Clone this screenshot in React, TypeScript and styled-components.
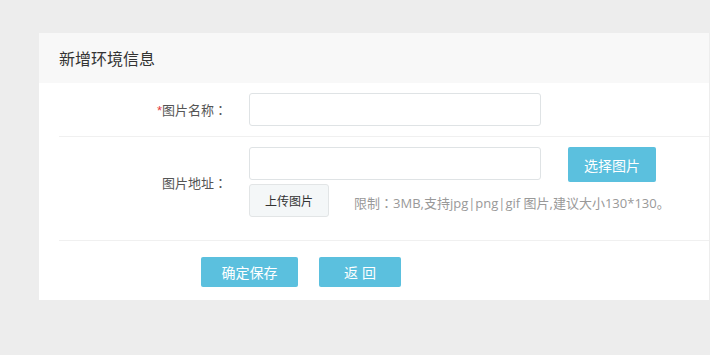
import React from "react";
import styled, { createGlobalStyle } from "styled-components";

const Global = createGlobalStyle`
  html, body { margin: 0; padding: 0; background: #ededed; }
  body { font-family: "Microsoft YaHei", "Liberation Sans", "Noto Sans CJK SC", sans-serif; }
  * { box-sizing: border-box; }
`;

const Page = styled.div`
  width: 710px;
  height: 355px;
  padding: 33px 1px 0 39px;
  background: #ededed;
`;

const Panel = styled.div`
  background: #fff;
  width: 670px;
`;

const Header = styled.div`
  height: 50px;
  background: #f8f8f8;
  display: flex;
  align-items: center;
  padding-left: 20px;
  font-size: 16px;
  color: #333;
`;

const Body = styled.div`
  padding-left: 20px;
`;

const Row = styled.div<{ $pt: number; $pb: number }>`
  display: flex;
  align-items: center;
  padding: ${(p) => p.$pt}px 0 ${(p) => p.$pb}px 0;
  border-bottom: 1px solid #f0f0f0;
`;

const Label = styled.div`
  width: 168px;
  margin-right: 22px;
  text-align: right;
  font-size: 13px;
  color: #555;
`;

const Colon = styled.span`
  font-family: "Noto Sans CJK TC", sans-serif;
`;

const Star = styled.span`
  color: #e4393c;
`;

const Input = styled.input`
  width: 292px;
  height: 33px;
  border: 1px solid #dfe3e5;
  border-radius: 3px;
  outline: none;
  padding: 0 8px;
  font-size: 13px;
  background: #fff;
`;

const Column = styled.div`
  display: flex;
  flex-direction: column;
`;

const TopLine = styled.div`
  display: flex;
  align-items: flex-start;
  gap: 27px;
`;

const BottomLine = styled.div`
  display: flex;
  align-items: center;
  margin-top: 2px;
  gap: 25px;
`;

const Button = styled.button<{ $w: number; $h: number }>`
  width: ${(p) => p.$w}px;
  height: ${(p) => p.$h}px;
  background: #5bc0de;
  color: #fff;
  border: none;
  border-radius: 2px;
  font-size: 14px;
  font-family: inherit;
  padding: 0;
  cursor: pointer;
`;

const UploadButton = styled.button`
  width: 80px;
  height: 33px;
  background: #f4f7f8;
  border: 1px solid #e2e5e6;
  border-radius: 3px;
  color: #333;
  font-size: 12px;
  font-family: inherit;
  padding: 0;
`;

const Hint = styled.span`
  font-family: "Open Sans", "Noto Sans CJK SC", sans-serif;
  font-size: 13px;
  color: #999;
  margin-top: 3px;
`;

const Actions = styled.div`
  display: flex;
  gap: 21px;
  padding: 16px 0 13px 162px;
`;

export default function App() {
  return (
    <>
      <Global />
      <Page>
        <Panel>
          <Header>新增环境信息</Header>
          <Body>
            <Row $pt={10} $pb={10}>
              <Label>
                <Star>*</Star>图片名称<Colon>：</Colon>
              </Label>
              <Input />
            </Row>
            <Row $pt={10} $pb={23}>
              <Label>
                图片地址<Colon>：</Colon>
              </Label>
              <Column>
                <TopLine>
                  <Input />
                  <Button $w={88} $h={35}>选择图片</Button>
                </TopLine>
                <BottomLine>
                  <UploadButton>上传图片</UploadButton>
                  <Hint>
                    限制<Colon>：</Colon>3MB,支持jpg|png|gif 图片,建议大小130*130。
                  </Hint>
                </BottomLine>
              </Column>
            </Row>
          </Body>
          <Actions>
            <Button $w={97} $h={30}>确定保存</Button>
            <Button $w={82} $h={30}>返 回</Button>
          </Actions>
        </Panel>
      </Page>
    </>
  );
}
